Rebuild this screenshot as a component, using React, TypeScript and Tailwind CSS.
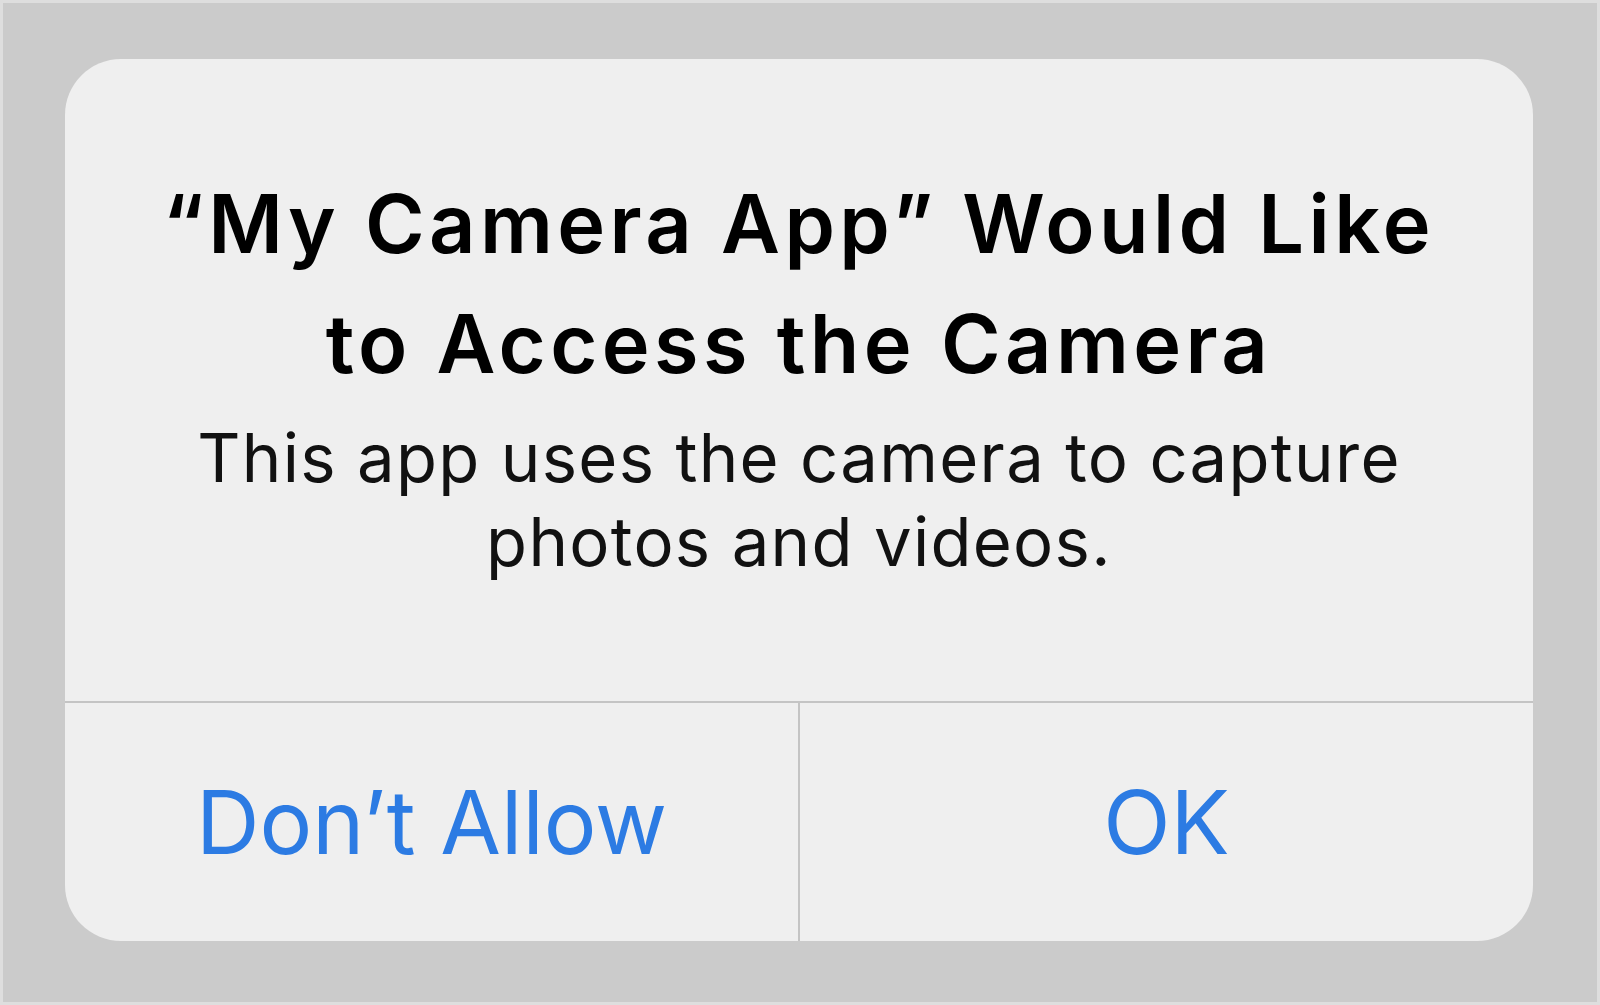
export default function App() {
  return (
    <div className="w-[1600px] h-[1005px] bg-[#cbcbcb] border-[3px] border-[#dedede] pl-[62px] pt-[56px] pr-[64px] pb-[61px] font-['Inter','Liberation_Sans',sans-serif]">
      <div className="h-full rounded-[56px] bg-[#efefef] flex flex-col overflow-hidden">
        <div className="h-[642px] flex flex-col items-center pt-[105px] text-center">
          <h1 className="text-[81px] leading-[120px] font-semibold tracking-[4.4px] text-black">
            “My Camera App” Would Like
            <br />
            to Access the Camera
          </h1>
          <p className="mt-[12px] text-[67px] leading-[84px] tracking-[1.3px] text-[#111]">
            This app uses the camera to capture
            <br />
            photos and videos.
          </p>
        </div>
        <div className="flex-1 flex border-t-2 border-[#c4c4c4]">
          <button className="flex-1 flex items-center justify-center text-[88px] text-[#2c7be3]">
            Don’t Allow
          </button>
          <div className="w-[2px] bg-[#c4c4c4]" />
          <button className="flex-1 flex items-center justify-center text-[88px] text-[#2c7be3]">
            OK
          </button>
        </div>
      </div>
    </div>
  );
}
